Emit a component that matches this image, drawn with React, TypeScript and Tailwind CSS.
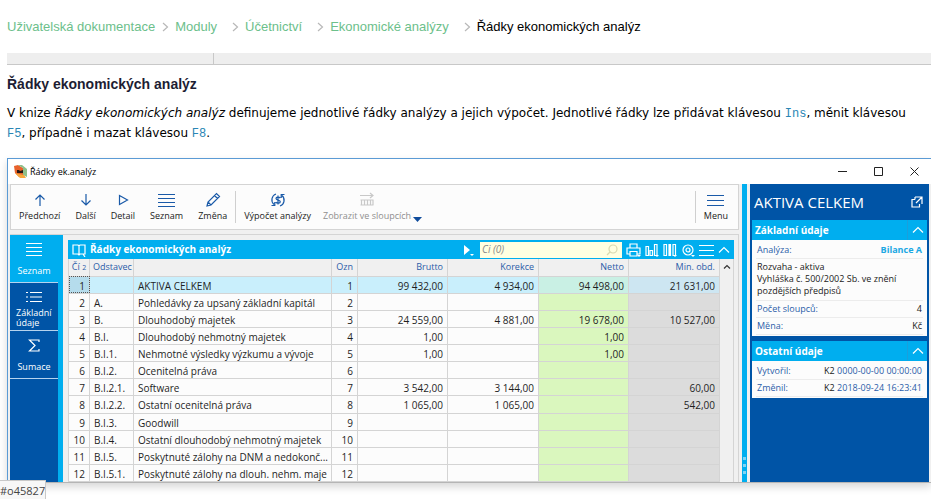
import type { ReactNode } from 'react';

type Row = {
  no: number;
  code: string;
  name: string;
  brutto?: string;
  korekce?: string;
  netto?: string;
  minObd?: string;
};

const ROWS: Row[] = [
  { no: 1, code: '', name: 'AKTIVA CELKEM', brutto: '99 432,00', korekce: '4 934,00', netto: '94 498,00', minObd: '21 631,00' },
  { no: 2, code: 'A.', name: 'Pohledávky za upsaný základní kapitál' },
  { no: 3, code: 'B.', name: 'Dlouhodobý majetek', brutto: '24 559,00', korekce: '4 881,00', netto: '19 678,00', minObd: '10 527,00' },
  { no: 4, code: 'B.I.', name: 'Dlouhodobý nehmotný majetek', brutto: '1,00', netto: '1,00' },
  { no: 5, code: 'B.I.1.', name: 'Nehmotné výsledky výzkumu a vývoje', brutto: '1,00', netto: '1,00' },
  { no: 6, code: 'B.I.2.', name: 'Ocenitelná práva' },
  { no: 7, code: 'B.I.2.1.', name: 'Software', brutto: '3 542,00', korekce: '3 144,00', minObd: '60,00' },
  { no: 8, code: 'B.I.2.2.', name: 'Ostatní ocenitelná práva', brutto: '1 065,00', korekce: '1 065,00', minObd: '542,00' },
  { no: 9, code: 'B.I.3.', name: 'Goodwill' },
  { no: 10, code: 'B.I.4.', name: 'Ostatní dlouhodobý nehmotný majetek' },
  { no: 11, code: 'B.I.5.', name: 'Poskytnuté zálohy na DNM a nedokonč...' },
  { no: 12, code: 'B.I.5.1.', name: 'Poskytnuté zálohy na dlouh. nehm. maje' },
];

const CRUMBS = ['Uživatelská dokumentace', 'Moduly', 'Účetnictví', 'Ekonomické analýzy'];

type IconProps = { d: string; w?: number; h?: number; className?: string; sw?: number; caret?: boolean };

function Icon({ d, w = 16, h = 16, className = '', sw = 1.2, caret = false }: IconProps) {
  return (
    <svg width={w} height={h} viewBox={`0 0 ${w} ${h}`} fill="none" stroke="currentColor" strokeWidth={sw} className={`shrink-0 ${className}`} aria-hidden="true">
      <path d={d} />
      {caret && <path d={`M${w - 4} ${h - 2}h4l-2 2z`} fill="currentColor" stroke="none" />}
    </svg>
  );
}

function ToolButton({ label, children, disabled = false }: { label: string; children: ReactNode; disabled?: boolean }) {
  return (
    <button type="button" disabled={disabled} className="flex flex-col items-center gap-[2px] leading-3 whitespace-nowrap text-[#1a5aa8] disabled:text-[#c8c8c8]">
      <span className="flex h-4 items-center">{children}</span>
      <span className={disabled ? 'text-[#8f8f8f]' : 'text-[#1a1a1a]'}>{label}</span>
    </button>
  );
}

function SideButton({ label, children, active = false }: { label: string; children: ReactNode; active?: boolean }) {
  return (
    <button
      type="button"
      className={`flex h-12 w-12 flex-col items-center justify-between border-b border-[#b5d3ee] pt-1 pb-[2px] leading-[10px] text-white ${active ? 'bg-[#00aeef]' : ''}`}
    >
      <span className="flex h-5 items-center">{children}</span>
      <span className={label.includes(' ') ? 'w-9 text-left' : 'pb-1'}>{label}</span>
    </button>
  );
}

function Card({ title, children }: { title: string; children: ReactNode }) {
  return (
    <section className="bg-[#fcfcfc] pb-px">
      <header className="flex h-5 items-center bg-[#00aeef] text-white">
        <h3 className="flex-1 pl-[3px] text-[10px] font-bold">{title}</h3>
        <button type="button" aria-label="Sbalit" className="flex h-full w-5 items-center justify-center border-l border-[#1b9fdc]">
          <Icon w={12} h={8} d="M1 6.500L6 1.500l5 5" />
        </button>
      </header>
      <div className="px-1 pt-[2px]">{children}</div>
    </section>
  );
}

function Field({ label, children }: { label: string; children: ReactNode }) {
  return (
    <dl className="flex h-[17px] items-center justify-between border-b border-[#ececec] px-px">
      <dt className="text-[#2b5ca8]">{label}</dt>
      <dd className="text-[#1a1a1a]">{children}</dd>
    </dl>
  );
}

function Key({ children }: { children: ReactNode }) {
  return <code className="font-['Liberation_Mono',monospace] leading-none text-[#2a86b5]">{children}</code>;
}

const LINES = 'M0 1.500h18M0 5.500h18M0 9.500h18M0 13.500h18';

export default function App() {
  return (
    <div className="relative overflow-hidden bg-white pl-[7px] font-['DejaVu_Sans',sans-serif] text-[12px] text-black">
      <nav aria-label="Drobečková navigace" className="flex h-[53px] items-center whitespace-nowrap font-['Liberation_Sans',sans-serif] text-[13px]">
        {CRUMBS.map((c, i) => (
          <span key={c} className="flex items-center">
            <a href="#" className="text-[#6cc08b]">{c}</a>
            <Icon w={7} h={10} d="M1 1l4.500 4L1 9" className={i === 0 ? 'mr-[6px] ml-[7px] text-[#b8b8b8]' : 'mr-[6px] ml-[15px] text-[#b8b8b8]'} />
          </span>
        ))}
        <span>Řádky ekonomických analýz</span>
      </nav>

      <div className="h-3 border-b border-[#c8c8c8] bg-[#eeeeee]">
        <div className="h-full w-[207px] border-r border-[#c8c8c8]" />
      </div>

      <h1 className="mt-[10px] font-['Liberation_Sans',sans-serif] text-[14px] leading-[18px] font-bold text-[#1d1d33]">Řádky ekonomických analýz</h1>
      <p className="mt-[10px] leading-5 whitespace-nowrap">
        V knize <em>Řádky ekonomických analýz</em> definujeme jednotlivé řádky analýzy a jejich výpočet. Jednotlivé řádky lze přidávat klávesou{' '}
        <Key>Ins</Key>, měnit klávesou
        <br />
        <Key>F5</Key>, případně i mazat klávesou <Key>F8</Key>.
      </p>

      <div className="mt-[15px] border-t border-b border-l border-[#5b9bd5] border-b-[#b5b5b5] bg-[#f0f0f0] font-['Open_Sans','Noto_Sans',sans-serif] text-[9px] shadow-[0_4px_8px_#d8d8d8]">
        <header className="flex h-[25px] items-center bg-white pr-3 pl-[6px]">
          <svg width="13" height="13" viewBox="0 0 13 13" aria-hidden="true">
            <path d="M0 1l4-1 5 3v8l-4 1-4-4z" fill="#e8622c" />
            <path d="M4 0h4l5 4v8l-4-2V3z" fill="#8fbf8a" />
            <path d="M1 8l4 1 5 1 2 3H6z" fill="#f6a83c" />
            <path d="M3 5h2l1 1 3-1v3H3z" fill="#2a1a14" />
          </svg>
          <h2 className="flex-1 pl-[3px]">Řádky ek.analýz</h2>
          <div className="flex gap-[27px] text-[#222]">
            <button type="button" aria-label="Minimalizovat"><Icon w={9} h={9} sw={1} d="M0 4.500h9" /></button>
            <button type="button" aria-label="Maximalizovat"><Icon w={9} h={9} sw={1} d="M.5 .5h8v8h-8z" /></button>
            <button type="button" aria-label="Zavřít"><Icon w={9} h={9} sw={1} d="M.5 .5l8 8M8.500 .5l-8 8" /></button>
          </div>
        </header>

        <div className="flex">
          <div className="min-w-0 flex-1 pr-[3px] pl-[2px]">
            <div className="flex h-[46px] items-center border border-[#d4d4d4] bg-[#fcfcfc] pr-[10px] pl-2">
              <div className="flex gap-[15px]">
                <ToolButton label="Předchozí"><Icon d="M8 14V3M3.500 7.500L8 3l4.500 4.500" /></ToolButton>
                <ToolButton label="Další"><Icon d="M8 2v11M3.500 8.500L8 13l4.500-4.500" /></ToolButton>
                <ToolButton label="Detail"><Icon d="M4.500 3.500v9l8-4.500z" /></ToolButton>
                <ToolButton label="Seznam"><Icon w={17} h={15} d={LINES} /></ToolButton>
                <ToolButton label="Změna"><Icon d="M2 14l1-4 8.500-8.500 3 3L6 13zM9.500 3.500l3 3M3 10l3 3" /></ToolButton>
              </div>
              <div className="mx-2 h-8 border-l border-[#cfcfcf]" />
              <div className="flex gap-3">
                <ToolButton label="Výpočet analýzy">
                  <Icon d="M6 2A6.200 6.200 0 0 0 4 12.500M1.500 13.500H4.800V10M10 14A6.200 6.200 0 0 0 12 3.500M14.500 2.500H11.200V6M10.300 6C9.300 4.800 6 4.600 6 6.500S10.300 7.800 10.300 9.700 6.800 11.500 5.700 10.200M8 3.500v9" />
                </ToolButton>
                <ToolButton label="Zobrazit ve sloupcích" disabled>
                  <Icon d="M1 3.500h13M11 1l3 2.500L11 6M1.500 8h13M1.500 13h13M2.500 8v5M5.500 8v5M8.500 8v5M11.500 8v5M14 8v5" />
                </ToolButton>
              </div>
              <svg width="9" height="5" viewBox="0 0 9 5" className="mt-6 ml-[2px]" aria-hidden="true"><path d="M0 0h9L4.500 5z" fill="#0f4c9c" /></svg>
              <div className="ml-auto h-8 border-l border-[#cfcfcf] pr-2" />
              <ToolButton label="Menu"><Icon w={17} h={12} d="M0 1.500h18M0 6.500h18M0 11.500h18" /></ToolButton>
            </div>

            <div className="mt-1 flex border-t border-r border-[#d4d4d4]">
              <aside className="w-[53px] shrink-0 border-r-[5px] border-[#00aeef] bg-[#0054a6]">
                <SideButton label="Seznam" active><Icon w={16} h={15} d={LINES} /></SideButton>
                <SideButton label="Základní údaje"><Icon w={16} h={12} d="M0 1.500h2M4 1.500h12M0 6h2M4 6h12M0 10.500h2M4 10.500h12" /></SideButton>
                <SideButton label="Sumace"><Icon w={12} h={13} d="M11 3V1H1.500L7 6.500L1.500 12H11v-2" /></SideButton>
              </aside>

              <section className="min-w-0 flex-1 pt-[5px] pr-1 pl-[5px]">
                <header className="flex h-[19px] items-center gap-1 bg-[#00aeef] px-1 text-white">
                  <Icon w={14} h={14} d="M1 2h5l1 1 1-1h5v9H8l-1 1-1-1H1zM7 3v9M11 11l2 3" />
                  <h3 className="flex-1 text-[10px] font-bold">Řádky ekonomických analýz</h3>
                  <button type="button" aria-label="Filtr" className="mr-[2px]"><svg width="10" height="12" viewBox="0 0 10 12" fill="#fff" aria-hidden="true"><path d="M0 1l6 5-6 5zM6 10h4l-2 2z" /></svg></button>
                  <div className="flex h-4 w-[142px] items-center bg-[#ffffe1] pr-1 text-[#d9d9b0]">
                    <input aria-label="Hledat" placeholder="Ci (0)" className="min-w-0 flex-1 bg-transparent pl-[2px] text-[10px] text-[#1f1f1f] italic outline-none placeholder:text-[#8a8a8a]" />
                    <Icon w={12} h={12} d="M11 5a4 4 0 1 1-8 0 4 4 0 0 1 8 0zM4 8L1 11" />
                  </div>
                  <button type="button" aria-label="Tisk"><Icon w={15} h={14} caret d="M4 5V1h7v4M3.500 11H1V5h13v6h-2.500M4 8.500h7V13H4z" /></button>
                  <button type="button" aria-label="Graf"><Icon w={14} h={14} caret d="M1 3.500h2.500v9H1zM5 7.500h2.500v5H5zM9.500 1.500H12v11H9.500z" /></button>
                  <button type="button" aria-label="Sloupce"><Icon w={14} h={14} caret d="M1 1.500h2.500v11H1zM6 1.500h1.500v11H6zM6.800 1.500v11M10 1.500h2.500v11H10z" /></button>
                  <button type="button" aria-label="Nastavení"><Icon w={14} h={14} caret d="M12 7A5 5 0 1 1 2 7a5 5 0 0 1 10 0zM9 7a2 2 0 1 1-4 0 2 2 0 0 1 4 0z" /></button>
                  <button type="button" aria-label="Nabídka"><Icon w={15} h={12} d="M0 1.500h15M0 6.500h15M0 11.500h15" /></button>
                  <button type="button" aria-label="Sbalit"><Icon w={12} h={8} d="M1 6.500L6 1.500l5 5" /></button>
                </header>

                <div className="flex">
                  <div className="min-w-0 flex-1">
                    <table className="h-[223px] w-full table-fixed border-collapse bg-[#fcfcfc] text-[10px] text-[#1f1f1f]">
                      <colgroup>
                        <col className="w-[21px]" />
                        <col className="w-[44px]" />
                        <col />
                        <col className="w-[26px]" />
                        <col className="w-[90px]" />
                        <col className="w-[91px]" />
                        <col className="w-[90px]" />
                        <col className="w-[91px]" />
                      </colgroup>
                      <thead>
                        <tr className="bg-[#f0f0f0] text-[9px] text-[#2b5ca8] *:h-[17px] *:border *:border-t-0 *:border-[#d4d4d4] *:py-0 *:leading-3 *:font-normal">
                          <th className="px-0 whitespace-nowrap">Čí <small className="text-[7px] leading-none">2</small></th>
                          <th className="pr-0 pl-[3px] text-left">Odstavec</th>
                          <th aria-label="Název" />
                          <th className="pr-1 pl-0 text-right">Ozn</th>
                          <th className="pr-1 text-right">Brutto</th>
                          <th className="pr-1 text-right">Korekce</th>
                          <th className="pr-1 text-right">Netto</th>
                          <th className="pr-1 text-right">Min. obd.</th>
                        </tr>
                      </thead>
                      <tbody>
                        {ROWS.map((r) => {
                          const on = r.no === 1;
                          return (
                            <tr key={r.no} className={`*:border *:border-[#d4d4d4] *:pt-[2px] *:pb-0 *:leading-[14px] *:whitespace-nowrap ${on ? 'bg-[#c9effc]' : ''}`}>
                              <td className={`pr-1 pl-0 text-right ${on ? 'bg-[#b5dcec] outline outline-dotted -outline-offset-1 outline-[#555]' : ''}`}>{r.no}</td>
                              <td className="pr-0 pl-1">{r.code}</td>
                              <td className="pr-0 pl-1">{r.name}</td>
                              <td className="pr-1 pl-0 text-right">{r.no}</td>
                              <td className="pr-1 text-right">{r.brutto}</td>
                              <td className="pr-1 text-right">{r.korekce}</td>
                              <td className={`pr-1 text-right ${on ? 'bg-[#c9f0e4]' : 'bg-[#daf7be]'}`}>{r.netto}</td>
                              <td className={`pr-1 text-right ${on ? 'bg-[#cde6f2]' : 'bg-[#dcdcdc]'}`}>{r.minObd}</td>
                            </tr>
                          );
                        })}
                      </tbody>
                    </table>
                  </div>
                  <div className="flex w-[14px] justify-center border-r border-[#d4d4d4] pt-1 text-[#333]">
                    <Icon w={8} h={8} d="M1 5.500l3-3 3 3" />
                  </div>
                </div>
              </section>
            </div>
          </div>

          <div className="flex w-[5px] flex-col items-center justify-end gap-1 bg-[#00aeef] pb-2">
            <i className="size-[3px] bg-[#7fd4f5]" />
            <i className="size-[3px] bg-[#7fd4f5]" />
            <i className="size-[3px] bg-[#7fd4f5]" />
          </div>

          <aside className="mr-[2px] ml-[3px] w-[179px] shrink-0 bg-[#0054a6] px-[2px] pb-2">
            <header className="flex h-[36px] items-center justify-between pr-1 pl-[2px] text-white">
              <h2 className="text-[15px]">AKTIVA CELKEM</h2>
              <button type="button" aria-label="Otevřít"><Icon w={12} h={12} d="M4 3.500H1V11h7.500V8M4 1h7v7M11 1L5 7M4 1v2.500" /></button>
            </header>
            <div className="flex flex-col gap-[5px]">
              <Card title="Základní údaje">
                <Field label="Analýza:"><a href="#" className="font-bold text-[#1ba8e3]">Bilance A</a></Field>
                <p className="border-b border-[#ececec] pt-[2px] pb-[3px] pl-px leading-3 text-[#1a1a1a]">Rozvaha - aktiva<br />Vyhláška č. 500/2002 Sb. ve znění<br />pozdějších předpisů</p>
                <Field label="Počet sloupců:">4</Field>
                <Field label="Měna:">Kč</Field>
              </Card>
              <Card title="Ostatní údaje">
                <Field label="Vytvořil:">K2 <span className="text-[#2b5ca8]">0000-00-00 00:00:00</span></Field>
                <Field label="Změnil:">K2 <span className="text-[#2b5ca8]">2018-09-24 16:23:41</span></Field>
              </Card>
            </div>
          </aside>
        </div>
      </div>
      <div className="h-4" />

      <div className="fixed bottom-0 left-0 h-[19px] w-[46px] overflow-hidden border-t border-r border-[#c8c8c8] bg-[#f7f7f7] font-['Open_Sans',sans-serif] text-[11px] leading-[20px] text-[#444]">#o45827</div>
    </div>
  );
}
